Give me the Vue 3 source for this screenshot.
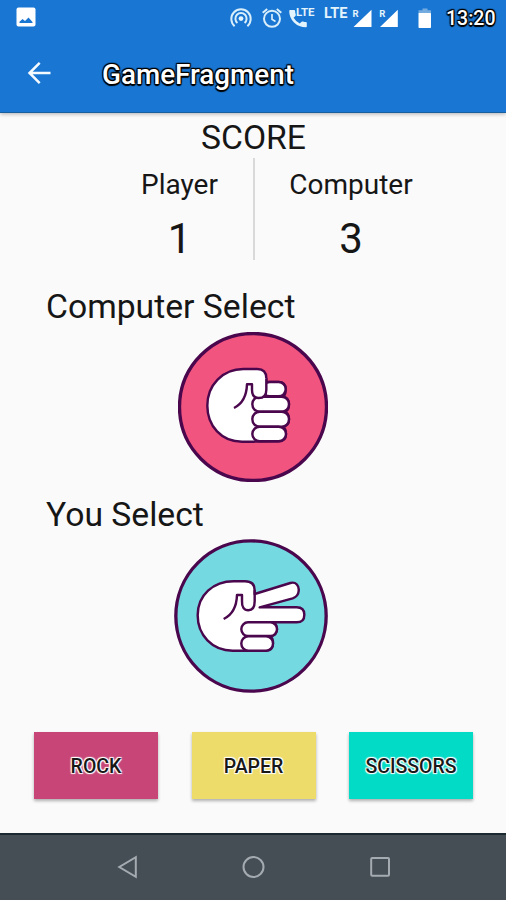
<template>
  <div class="screen">
    <header class="app-header">
      <div class="status-bar">
        <svg class="picture-icon" viewBox="0 0 20 20">
          <rect x="0.5" y="0.5" width="19" height="19" rx="2" fill="#fff" />
          <path d="M3.5 16 V14.8 L6.5 12 L9 14 L12.5 10.5 L16.5 15 V16 Z" fill="#1976d2" />
        </svg>
        <svg class="status-icons" viewBox="220 0 286 36">
          <g fill="none" stroke="#d8eefa" stroke-width="2">
            <path d="M234.6 26.2 A9.7 9.7 0 1 1 247.4 26.2" />
            <path d="M237.4 22.9 A5.6 5.6 0 1 1 244.6 22.9" />
            <circle cx="272" cy="18.8" r="8" />
            <path d="M272 14 V19.3 L275.5 21.5" stroke-width="1.7" />
            <path d="M262.7 12.8 L267.2 9 M281.3 12.8 L276.8 9" />
          </g>
          <circle cx="241" cy="18.6" r="2.4" fill="#e4f4fc" />
          <path
            d="M290.2 10 L294.2 10 Q295 10 295.1 11 Q295.2 13 295.8 14.6 Q296 15.4 295.4 16 L293.6 17.8 Q296 21.8 299.8 23.6 L301.6 21.8 Q302.2 21.2 303 21.5 Q304.5 22 306 22.1 Q306.8 22.2 306.8 23 L306.8 26.5 Q306.8 27.3 306 27.3 Q298.8 27.3 294 22.5 Q289.2 17.5 289.2 11 Q289.2 10 290.2 10 Z"
            fill="#e4f4fc"
          />
          <text x="296" y="16.2" font-size="11" textLength="18.5" lengthAdjust="spacingAndGlyphs">LTE</text>
          <text x="324" y="18" font-size="14" textLength="23.5" lengthAdjust="spacingAndGlyphs">LTE</text>
          <text x="352.4" y="17" font-size="9.5">R</text>
          <text x="379.2" y="17" font-size="9.5">R</text>
          <path d="M371.5 9.8 V27 H353.5 Z M397.8 9.8 V27 H380 Z" fill="#fff" />
          <path d="M422.5 8.5 H427.5 V10.2 H431 V14 H418.5 V10.2 H422.5 Z" fill="#75acdf" />
          <rect x="418.5" y="13" width="12.5" height="15" rx="0.8" fill="#fff" />
        </svg>
        <span class="clock">13:20</span>
      </div>
      <div class="toolbar">
        <svg class="back-icon" viewBox="0 0 24 24">
          <path d="M23.5 12 H3 M12.7 1.8 L2.5 12 L12.7 22.2" fill="none" stroke="#f5faff" stroke-width="2.5" />
        </svg>
        <h1>GameFragment</h1>
      </div>
    </header>

    <main>
      <h2 class="score-title">SCORE</h2>
      <section class="scores">
        <div class="score player">
          <span class="name">Player</span>
          <span class="points">{{ playerScore }}</span>
        </div>
        <div class="divider"></div>
        <div class="score computer">
          <span class="name">Computer</span>
          <span class="points">{{ computerScore }}</span>
        </div>
      </section>

      <section class="selection">
        <h3>Computer Select</h3>
        <svg class="hand rock" viewBox="24 21 450 450">
          <circle cx="249" cy="246" r="220" fill="#f1557f" />
          <g class="lines">
            <path d="M250 350 H216 C155 350 112 303 112 242 C112 180 158 132 220 132 H262 C280 132 289 143 289 160 V171 H326 Q347 171 347 193 Q347 214 338 214 Q357 217 357 238 Q357 258 344 260 Q357 264 357 283 Q357 302 340 305 Q348 311 348 328 Q348 349 326 349 Z" />
            <rect x="278" y="171" width="69" height="43" rx="21" />
            <rect x="247" y="215" width="110" height="45" rx="22" />
            <rect x="247" y="260" width="110" height="45" rx="22" />
            <rect x="247" y="305" width="101" height="44" rx="22" />
            <path class="skin" d="M246 178 V194 C246 211 253 219 266 219 C281 219 289 211 289 194 V160 L240 150 Z" />
            <path class="crease" d="M192 249 C221 235 230 208 231 178 H246 V194 C246 211 253 219 266 219 C281 219 289 211 289 194 V160" />
          </g>
          <circle class="ring" cx="249" cy="246" r="220.5" />
        </svg>
      </section>

      <section class="selection second">
        <h3>You Select</h3>
        <svg class="hand scissors" viewBox="25 22 462 462">
          <circle cx="256" cy="253" r="226" fill="#74d9e0" />
          <g class="lines">
            <path d="M225 357 H201 C139 357 96 310 96 251 C96 190 143 149 204 149 H238 C257 149 267 159 267 176 V187 L374 154 C391 149 401 163 399 178 C398 191 390 197 381 200 L282 227 H393 Q416 227 416 249 Q416 272 393 272 H312 Q334 272 334 292 Q334 311 314 313 Q322 319 322 335 Q322 357 301 357 Z" />
            <rect x="227" y="272" width="107" height="41" rx="20" />
            <rect x="227" y="314" width="95" height="43" rx="21" />
            <path class="crease" d="M174 262 C203 248 213 221 214 190 H229 V208 C228 226 235 236 248 236 C261 236 267 225 267 209 V176" />
          </g>
          <circle class="ring" cx="256" cy="253" r="225.5" />
        </svg>
      </section>

      <div class="choices">
        <button
          v-for="choice in choices"
          :key="choice"
          :class="choice"
          @click="selected = choice"
        >
          {{ choice }}
        </button>
      </div>
    </main>

    <nav class="navigation">
      <svg viewBox="0 0 24 24"><path d="M20.8 2.2 V21.8 L4.3 12 Z" /></svg>
      <svg viewBox="0 0 24 24"><circle cx="11.5" cy="12" r="10" /></svg>
      <svg viewBox="0 0 24 24"><rect x="3.2" y="3" width="17.8" height="17.8" rx="1" /></svg>
    </nav>
  </div>
</template>

<script setup>
import { ref } from 'vue';

const playerScore = ref(1);
const computerScore = ref(3);
const selected = ref('scissors');
const choices = ['rock', 'paper', 'scissors'];
</script>

<style>
body {
  margin: 0;
}
</style>

<style scoped>
.screen {
  display: flex;
  flex-direction: column;
  width: 506px;
  height: 900px;
  overflow: hidden;
  background: #fafafa;
  color: #161616;
  font-family: Roboto, sans-serif;
}

h1,
h2,
h3 {
  margin: 0;
  font-weight: 400;
}

svg {
  display: block;
  flex-shrink: 0;
}

.app-header {
  z-index: 1;
  height: 112px;
  border-bottom: 1px solid #17609f;
  background: #1976d2;
  box-shadow: 0 1px 4px rgba(0, 0, 0, 0.3);
}

.status-bar {
  display: grid;
  grid-template-columns: 220px 226px 60px;
  height: 36px;
}

.picture-icon {
  width: 20px;
  height: 20px;
  margin: 7px 0 0 16px;
}

.status-icons {
  width: 286px;
  height: 36px;
}

.status-icons text {
  fill: #e4f4fc;
  font-family: Roboto, sans-serif;
  font-weight: 700;
}

.clock,
h1 {
  color: #fff;
  font-weight: 500;
  text-shadow: -1px -1px 1px #000, 1px -1px 1px #000, -1px 1px 1px #000,
    1px 1px 1px #000, 0 2px 1px #000, 0 -1px 1px #000;
}

.clock {
  font-size: 19.5px;
  line-height: 38px;
}

.toolbar {
  display: flex;
  align-items: center;
  height: 76px;
  padding-left: 27px;
}

.back-icon {
  width: 24px;
  height: 24px;
  margin-top: -2px;
}

h1 {
  margin: 2px 0 0 51px;
  font-size: 27.8px;
  letter-spacing: 0;
  line-height: 76px;
}

main {
  display: flex;
  flex: 1;
  flex-direction: column;
}

.score-title {
  height: 45px;
  padding-left: 1px;
  font-size: 33.7px;
  line-height: 50px;
  text-align: center;
}

.scores {
  display: flex;
  height: 102px;
}

.score {
  display: flex;
  flex-direction: column;
  align-items: center;
}

.player {
  width: 147px;
  padding-left: 106px;
}

.computer {
  width: 192px;
}

.divider {
  width: 2px;
  background: #d9d9d9;
}

.name {
  height: 53px;
  font-size: 28px;
  line-height: 53px;
}

.points {
  font-size: 42px;
  line-height: 55px;
}

.selection {
  display: flex;
  flex-direction: column;
  height: 207px;
  padding-top: 20px;
  box-sizing: border-box;
}

.selection h3 {
  height: 52px;
  padding-left: 46px;
  font-size: 33.7px;
  line-height: 54px;
}

.selection.second h3 {
  line-height: 56px;
}

.hand {
  align-self: center;
}

.rock.hand {
  width: 150px;
  height: 150px;
}

.scissors.hand {
  width: 154px;
  height: 154px;
  margin-right: 4px;
}

.second {
  height: 265px;
}

.lines {
  fill: #fff;
  stroke: #4b074d;
  stroke-linejoin: round;
  stroke-width: 7.3;
}

.lines .crease {
  fill: none;
}

.lines .skin {
  stroke: none;
}

.ring {
  fill: none;
  stroke: #4b074d;
  stroke-width: 10;
}

.choices {
  display: flex;
  gap: 33.5px;
  padding-left: 34px;
}

.choices button {
  width: 124px;
  height: 67px;
  padding: 2px 0 0;
  border: 0;
  box-shadow: 0 2px 3px rgba(0, 0, 0, 0.3);
  color: #181818;
  font: 500 19.5px Roboto, sans-serif;
  text-shadow: -1px -1px 1px #fff, 1px -1px 1px #fff, -1px 1px 1px #fff,
    1px 1px 1px #fff;
  text-transform: uppercase;
}

.choices .rock {
  background: #c74677;
}

.choices .paper {
  background: #eddc6a;
}

.choices .scissors {
  background: #02dcc6;
}

.navigation {
  display: flex;
  justify-content: space-between;
  height: 65px;
  padding: 0 114px 0 115px;
  border-top: 2px solid #1b2930;
  background: #454d55;
}

.navigation svg {
  width: 24px;
  height: 24px;
  margin-top: 20px;
  fill: none;
  stroke: #a5acb1;
  stroke-width: 2;
}
</style>
